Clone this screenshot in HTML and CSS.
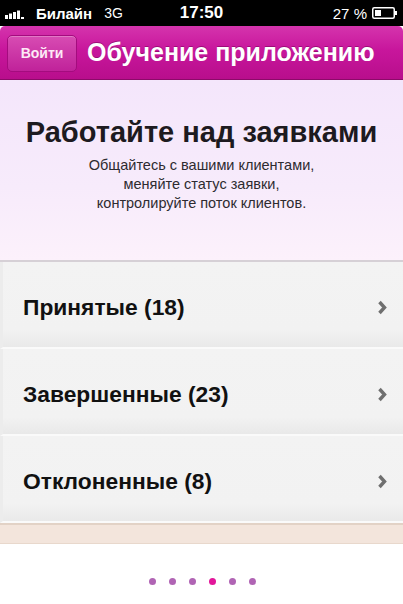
FILE: index.html
```html
<!DOCTYPE html>
<html lang="ru">
<head>
<meta charset="utf-8">
<title>Обучение приложению</title>
<link rel="stylesheet" href="styles.css">
</head>
<body>
<div class="screen">
  <div class="status">
    <div class="st-left">
      <svg class="signal" width="26" height="10" viewBox="0 0 26 10">
        <rect x="0" y="6" width="3" height="4" fill="#fff"/>
        <rect x="4" y="4.5" width="3" height="5.5" fill="#fff"/>
        <rect x="8" y="3" width="3" height="7" fill="#fff"/>
        <rect x="12" y="1.5" width="3" height="8.5" fill="#fff"/>
        <rect x="16" y="8" width="3" height="2" fill="#fff"/>
      </svg>
      <span class="carrier">Билайн</span>
      <span class="net">3G</span>
    </div>
    <div class="st-time">17:50</div>
    <div class="st-right">
      <span class="pct">27 %</span>
      <svg class="battery" width="26" height="12" viewBox="0 0 26 12">
        <rect x="0.75" y="0.75" width="21.5" height="10.5" rx="1.5" fill="none" stroke="#fff" stroke-width="1.5"/>
        <rect x="3" y="3" width="6" height="6" fill="#fff"/>
        <rect x="23" y="4" width="2" height="4" fill="#fff"/>
      </svg>
    </div>
  </div>
  <div class="navbar">
    <button class="btn">Войти</button>
    <h1 class="title">Обучение приложению</h1>
  </div>
  <div class="intro">
    <h2 class="heading">Работайте над заявками</h2>
    <p class="sub">Общайтесь с вашими клиентами,<br>меняйте статус заявки,<br>контролируйте поток клиентов.</p>
  </div>
  <ul class="list">
    <li class="row"><span class="label">Принятые (18)</span><span class="chev"><svg width="11" height="15" viewBox="0 0 11 15"><path d="M2.5 2 L7.5 7.5 L2.5 13" fill="none" stroke="#6f6f6f" stroke-width="3.4"/></svg></span></li>
    <li class="row"><span class="label">Завершенные (23)</span><span class="chev"><svg width="11" height="15" viewBox="0 0 11 15"><path d="M2.5 2 L7.5 7.5 L2.5 13" fill="none" stroke="#6f6f6f" stroke-width="3.4"/></svg></span></li>
    <li class="row"><span class="label">Отклоненные (8)</span><span class="chev"><svg width="11" height="15" viewBox="0 0 11 15"><path d="M2.5 2 L7.5 7.5 L2.5 13" fill="none" stroke="#6f6f6f" stroke-width="3.4"/></svg></span></li>
  </ul>
  <div class="strip"></div>
  <div class="pager">
    <span class="dot"></span>
    <span class="dot"></span>
    <span class="dot"></span>
    <span class="dot active"></span>
    <span class="dot"></span>
    <span class="dot"></span>
  </div>
</div>
</body>
</html>
```

FILE: styles.css
```css
* { box-sizing: border-box; }
html, body { margin: 0; padding: 0; }
body {
  width: 403px;
  height: 604px;
  overflow: hidden;
  background: #000;
  font-family: "Liberation Sans", Arial, sans-serif;
}
.screen {
  width: 403px;
  height: 604px;
  display: flex;
  flex-direction: column;
  background: #fff;
}
.status {
  height: 26px;
  background: #000;
  color: #fff;
  display: flex;
  align-items: center;
  justify-content: space-between;
  padding: 0 5px 0 5px;
}
.st-left { display: flex; align-items: center; width: 150px; }
.signal { margin-right: 5px; margin-top: 1px; }
.carrier { font-size: 15px; font-weight: bold; }
.net { font-size: 14px; margin-left: 12px; }
.st-time { font-size: 17px; font-weight: bold; }
.st-right { display: flex; align-items: center; justify-content: flex-end; gap: 5px; width: 150px; }
.pct { font-size: 15px; }

.navbar {
  height: 54px;
  background: linear-gradient(#d534ad 0%, #c8169c 45%, #b80e8c 100%);
  border-top-left-radius: 5px;
  border-top-right-radius: 5px;
  border-bottom: 1px solid #8c0a69;
  display: flex;
  align-items: center;
  padding: 0 7px;
  gap: 10px;
}
.btn {
  width: 70px;
  height: 37px;
  border: 1px solid #a40c7e;
  border-radius: 5px;
  background: linear-gradient(#d84cb3, #c0229a);
  box-shadow: inset 0 1px 0 rgba(255,255,255,0.25);
  color: #fde9f6;
  font-family: "Liberation Sans", Arial, sans-serif;
  font-weight: bold;
  font-size: 14px;
  padding: 0;
  margin-top: 1px;
}
.title {
  margin: 0;
  color: #fff;
  font-size: 25px;
  font-weight: bold;
  text-shadow: 0 -1px 0 rgba(110,0,80,0.5);
  white-space: nowrap;
}
.intro {
  height: 182px;
  background: linear-gradient(#f4e6fb 0%, #f7ebfb 60%, #fcf1fb 100%);
  text-align: center;
  padding-top: 35px;
  border-bottom: 2px solid #d6d0d6;
}
.heading {
  margin: 0;
  font-size: 29px;
  line-height: 34px;
  font-weight: bold;
  color: #1d1a20;
}
.sub {
  margin: 7px 0 0;
  font-size: 14.5px;
  line-height: 19px;
  color: #2e2b30;
}
.list {
  list-style: none;
  margin: 0;
  padding: 0;
  background: #f2f2f2;
}
.row {
  height: 87px;
  display: flex;
  align-items: center;
  justify-content: space-between;
  padding: 5px 15px 0 20px;
  background: linear-gradient(#f3f3f3 0%, #f2f2f2 80%, #e9e9e9 100%);
  border-bottom: 2px solid #fafafa;
  border-left: 3px solid #ececec;
}
.label {
  font-size: 22.8px;
  font-weight: bold;
  color: #111;
}
.chev { display: flex; align-items: center; margin-top: 1px; }
.strip {
  height: 21px;
  background: #f3e5dc;
  border-top: 2px solid #e2d2c6;
  border-bottom: 1px solid #e8d8cc;
}
.pager {
  flex: 1;
  display: flex;
  justify-content: center;
  align-items: center;
  gap: 13px;
  padding-left: 2px;
  padding-top: 14px;
}
.dot {
  width: 7px;
  height: 7px;
  border-radius: 50%;
  background: #b064b4;
}
.dot.active { background: #e2169a; }
```
